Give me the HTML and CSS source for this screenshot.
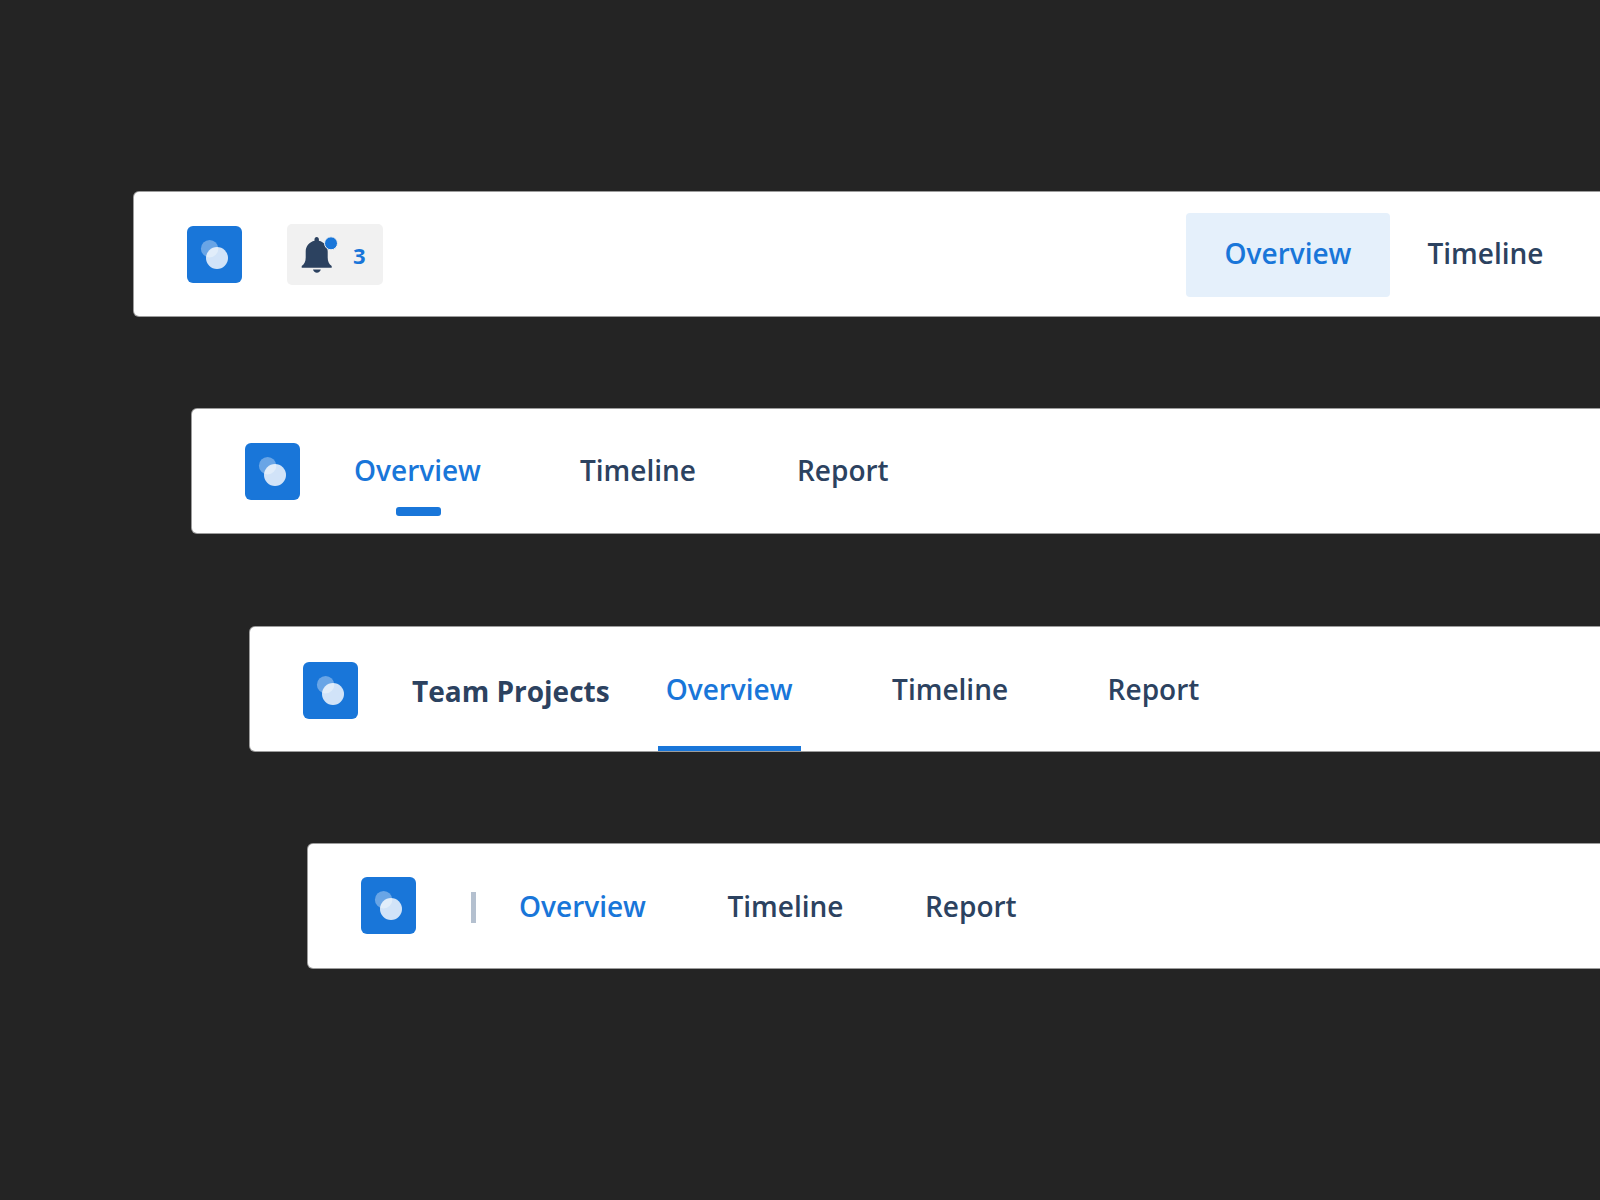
FILE: index.html
```html
<!DOCTYPE html>
<html lang="en">
<head>
  <meta charset="UTF-8">
  <title>Navigation bars</title>
  <link rel="stylesheet" href="styles.css">
</head>
<body>
  <div class="bar bar-one">
    <div class="logo">
      <svg width="55" height="57" viewBox="0 0 55 57"><circle cx="22.6" cy="22.7" r="8.7" fill="#fff" fill-opacity="0.35"/><circle cx="30" cy="32" r="11" fill="#fff" fill-opacity="0.8"/></svg>
    </div>
    <div class="bell">
      <svg class="bell-icon" width="40" height="40" viewBox="0 0 40 40">
        <path d="M15.700 1c1.300 0 2.200 1 2.200 2.300v1.500C23 6 26.700 10 26.700 15.500v6c0 4 1.300 6.500 4 8.500v1.700H.7V30c2.700-2 4-4.500 4-8.500v-6C4.700 10 8.400 6 13.500 4.800V3.300C13.500 2 14.400 1 15.700 1z" fill="#2c4260"/>
        <path d="M12 33.400h7.800c-.4 1.900-2 3.300-3.900 3.300s-3.500-1.400-3.900-3.300z" fill="#2c4260"/>
        <circle cx="30" cy="7.300" r="6.500" fill="#1976d9" stroke="#f1f1f1"/>
      </svg>
      <span class="bell-count">3</span>
    </div>
    <nav class="links links-pill">
      <a class="link active">Overview</a>
      <a class="link">Timeline</a>
    </nav>
  </div>

  <div class="bar bar-two">
    <div class="logo">
      <svg width="55" height="57" viewBox="0 0 55 57"><circle cx="22.6" cy="22.7" r="8.7" fill="#fff" fill-opacity="0.35"/><circle cx="30" cy="32" r="11" fill="#fff" fill-opacity="0.8"/></svg>
    </div>
    <nav class="links links-dash">
      <a class="link active">Overview</a>
      <a class="link">Timeline</a>
      <a class="link">Report</a>
    </nav>
  </div>

  <div class="bar bar-three">
    <div class="logo">
      <svg width="55" height="57" viewBox="0 0 55 57"><circle cx="22.6" cy="22.7" r="8.7" fill="#fff" fill-opacity="0.35"/><circle cx="30" cy="32" r="11" fill="#fff" fill-opacity="0.8"/></svg>
    </div>
    <div class="title">Team Projects</div>
    <nav class="links links-under">
      <a class="link active">Overview</a>
      <a class="link">Timeline</a>
      <a class="link">Report</a>
    </nav>
  </div>

  <div class="bar bar-four">
    <div class="logo">
      <svg width="55" height="57" viewBox="0 0 55 57"><circle cx="22.6" cy="22.7" r="8.7" fill="#fff" fill-opacity="0.35"/><circle cx="30" cy="32" r="11" fill="#fff" fill-opacity="0.8"/></svg>
    </div>
    <div class="divider"></div>
    <nav class="links links-plain">
      <a class="link active">Overview</a>
      <a class="link">Timeline</a>
      <a class="link">Report</a>
    </nav>
  </div>
</body>
</html>
```

FILE: styles.css
```css
* {
  padding: 0;
  margin: 0;
  box-sizing: border-box;
}
body {
  height: 1200px;
  padding-top: 192px;
  overflow: hidden;
  background-color: #242424;
  font-family: "Open Sans", sans-serif;
  display: flex;
  flex-direction: column;
  gap: 93.33px;
}
.bar {
  display: flex;
  align-items: center;
  flex: none;
  width: 1700px;
  height: 124px;
  padding-left: 53px;
  background-color: white;
  border-radius: 5px;
  box-shadow: 0 0 0 1px rgba(255, 255, 255, 0.55);
}
.bar-one {
  margin-left: 134px;
}
.bar-two {
  margin-left: 192px;
}
.bar-three {
  margin-left: 250px;
}
.bar-four {
  margin-left: 308px;
}
.logo {
  flex: none;
  width: 55px;
  height: 57px;
  background-color: #1976d9;
  border-radius: 6px;
}
.logo svg {
  display: block;
}
.bar-three .logo {
  margin-top: 4px;
}
.bell {
  display: flex;
  align-items: center;
  width: 96px;
  height: 61px;
  margin-left: 45px;
  padding-left: 14px;
  background-color: #f1f1f1;
  border-radius: 5px;
}
.bell-icon {
  flex: none;
  margin-top: 4px;
}
.bell-count {
  margin-left: 12px;
  margin-top: 2px;
  font-size: 22px;
  font-weight: 700;
  color: #1976d9;
}
.links {
  display: flex;
  align-items: center;
}
.link {
  font-size: 28px;
  font-weight: 600;
  color: #2c4260;
  white-space: nowrap;
}
.link.active {
  color: #1976d9;
}

.links-pill {
  margin-left: 803px;
  margin-top: 2px;
}
.links-pill .link {
  padding: 0 38.5px 4px;
  line-height: 80px;
  border-radius: 4px;
}
.links-pill .link.active {
  background-color: #e5f0fb;
}
.links-pill .link:last-child {
  padding-left: 37.5px;
}

.links-dash {
  margin-left: 54px;
  padding-bottom: 2px;
  gap: 99px;
}
.links-dash .link {
  position: relative;
}
.links-dash .link:last-child {
  margin-left: 2px;
}
.links-dash .link.active::after {
  content: "";
  position: absolute;
  left: 42px;
  bottom: -27px;
  width: 45px;
  height: 9px;
  background-color: #1976d9;
  border-radius: 3px;
}

.title {
  margin-left: 54px;
  margin-top: 4px;
  font-size: 28px;
  font-weight: 700;
  color: #2c4260;
  white-space: nowrap;
}
.links-under {
  align-self: stretch;
  margin-left: 48px;
  gap: 83.5px;
}
.links-under .link {
  display: flex;
  align-items: center;
  height: 100%;
  padding: 0 8px;
}
.links-under .link.active {
  box-shadow: inset 0 -5px 0 #1976d9;
}

.divider {
  width: 5px;
  height: 31px;
  margin-left: 55px;
  margin-top: 3px;
  background-color: #b4c0cf;
}
.links-plain {
  margin-left: 43px;
  gap: 81.5px;
}
```
